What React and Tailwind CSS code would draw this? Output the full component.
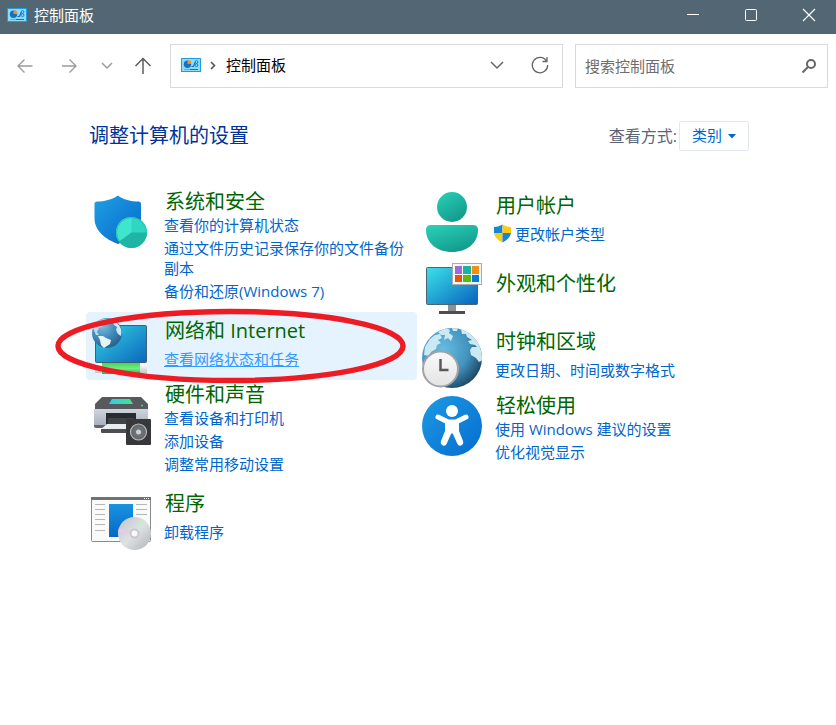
import React from "react";

function PanelIcon() {
  return (
    <svg width="20" height="14" viewBox="0 0 20 14" aria-hidden="true">
      <rect width="20" height="14" rx="0.5" fill="#1b9de2" />
      <rect x="1" y="1" width="18" height="12" fill="#8fdcfa" />
      <circle cx="6.500" cy="6.300" r="3.700" fill="#1173c7" />
      <path d="M6.500 6V2a4 4 0 0 1 3.800 4z" fill="#f78d1e" />
      <path d="M10.500 8.500h2l1.500-4" stroke="#1173c7" strokeWidth="1.200" fill="none" />
      <circle cx="15.500" cy="4" r="1.400" stroke="#1173c7" strokeWidth="0.900" fill="none" />
      <circle cx="15.500" cy="7.200" r="1.400" stroke="#1173c7" strokeWidth="0.900" fill="none" />
      <path d="M3 11.500h6" stroke="#f78d1e" />
      <path d="M9 11.500h8" stroke="#1173c7" />
    </svg>
  );
}

function Stroke({ size = 20, d, width = 1.3 }) {
  return (
    <svg width={size} height={size} viewBox="0 0 20 20" fill="none" stroke="currentColor" strokeWidth={width} aria-hidden="true">
      <path d={d} />
    </svg>
  );
}

function CategoryIcon({ children }) {
  return (
    <svg className="shrink-0" width="62" height="64" viewBox="0 0 62 64" aria-hidden="true">
      {children}
    </svg>
  );
}

function SecurityIcon() {
  return (
    <CategoryIcon>
      <defs>
        <linearGradient id="shield" x1="0" y1="0" x2="1" y2="1">
          <stop offset="0" stopColor="#1fa0e4" />
          <stop offset="1" stopColor="#0568cb" />
        </linearGradient>
      </defs>
      <path d="M28 6.500C33 10.500 41 12.500 49 12.500Q51 12.500 51 15V30C51 42 41 50 28 55C15 50 4.500 42 4.500 29V15Q4.500 12.500 7 12.500C14 12.500 22 10.500 28 6.500Z" fill="url(#shield)" />
      <circle cx="41.500" cy="43.500" r="15.500" fill="#2fd6c0" />
      <path d="M41.500 43.500V28A15.500 15.500 0 0 0 29 52.500Z" fill="#3fe6cd" />
      <path d="M41.500 43.500H57A15.500 15.500 0 0 1 29 52.700Z" fill="#1fb5a4" />
      <circle cx="41.500" cy="43.500" r="15" fill="none" stroke="#1fb5a4" strokeWidth="0.800" />
    </CategoryIcon>
  );
}

function NetworkIcon() {
  return (
    <CategoryIcon>
      <defs>
        <linearGradient id="netScreen" x1="0" y1="0" x2="1" y2="1">
          <stop offset="0" stopColor="#38d3e4" />
          <stop offset="1" stopColor="#0867bd" />
        </linearGradient>
        <linearGradient id="cable" x1="0" y1="0" x2="0" y2="1">
          <stop offset="0" stopColor="#45d45b" />
          <stop offset="0.500" stopColor="#6df07d" />
          <stop offset="1" stopColor="#32af48" />
        </linearGradient>
        <linearGradient id="plug" x1="0" y1="0" x2="0" y2="1">
          <stop offset="0" stopColor="#ffffff" />
          <stop offset="1" stopColor="#c3c8cc" />
        </linearGradient>
        <radialGradient id="netGlobe" cx="0.350" cy="0.250" r="0.800">
          <stop offset="0" stopColor="#7dbde0" />
          <stop offset="0.600" stopColor="#3c84b5" />
          <stop offset="1" stopColor="#275e86" />
        </radialGradient>
      </defs>
      <rect x="5.500" y="11.500" width="51" height="37" rx="1" fill="url(#netScreen)" stroke="#3d6073" />
      <rect x="5" y="50" width="52" height="9" fill="url(#plug)" />
      <rect x="12" y="49" width="38" height="11" fill="url(#cable)" />
      <circle cx="17" cy="19" r="15" fill="url(#netGlobe)" />
      <path d="M3 14Q6 8 11 5.500L17 5l-1 3-4 1 1 3-4 2-2 4 2 3-3 0z" fill="#b5dbec" />
      <path d="M8 22l5 0 3 2 5 2-1 4-3 2-3 2-3-3-1-5z" fill="#e6f3f7" />
      <path d="M22 6q6 2 9 9 1 3 0 7l-3-2-2-4 1-3-3-2z" fill="#cfe9f2" />
    </CategoryIcon>
  );
}

function HardwareIcon() {
  return (
    <CategoryIcon>
      <defs>
        <linearGradient id="scan"><stop offset="0" stopColor="#31cce9" /><stop offset="1" stopColor="#42e28c" /></linearGradient>
        <linearGradient id="printer" x1="0" y1="0" x2="0" y2="1"><stop offset="0" stopColor="#cfd5dd" /><stop offset="1" stopColor="#a5adb9" /></linearGradient>
      </defs>
      <path d="M12 15H51L58 22V27H5V22Z" fill="#565a5f" />
      <path d="M22 17H40L43 22H19Z" fill="url(#scan)" />
      <path d="M4 27H58V44Q58 45 57 45H5Q4 45 4 44Z" fill="url(#printer)" />
      <circle cx="52" cy="23.500" r="1" fill="#54db60" />
      <rect x="16" y="31" width="30" height="12" fill="#292b2e" />
      <rect x="18" y="36" width="26" height="6" fill="#414447" />
      <path d="M4 43H16V46H6Q4 46 4 44Z" fill="#62666b" />
      <path d="M17 42H38V47H11Z" fill="#e8edf0" />
      <path d="M11 47H38V51H12Q11 51 11 50Z" fill="#4b4e52" />
      <rect x="36" y="37" width="25" height="26" rx="1" fill="#38383a" />
      <circle cx="48.500" cy="50" r="8" fill="#66696d" stroke="#b7babc" strokeWidth="1.200" />
      <circle cx="48.500" cy="50" r="5.500" fill="#6d7176" />
      <circle cx="48.500" cy="50" r="2.500" fill="#cbd0d3" />
    </CategoryIcon>
  );
}

function ProgramsIcon() {
  return (
    <CategoryIcon>
      <defs>
        <linearGradient id="app" x1="0" y1="0" x2="0" y2="1"><stop offset="0" stopColor="#1894e1" /><stop offset="1" stopColor="#0868c4" /></linearGradient>
        <linearGradient id="disc" x1="0" y1="0" x2="1" y2="1"><stop offset="0" stopColor="#bfc4c7" /><stop offset="0.500" stopColor="#dfe2e3" /><stop offset="1" stopColor="#afb3b5" /></linearGradient>
      </defs>
      <rect x="1.500" y="10.500" width="59" height="44" rx="1" fill="#fafafa" stroke="#8a8a8a" />
      <path d="M1 10h60v3H1z" fill="#707274" />
      <path d="M54 11.500h5" stroke="#fff" strokeDasharray="1 1" />
      <rect x="19" y="17" width="24" height="33" fill="url(#app)" />
      <path d="M5 17.500h10M5 22.500h10M5 27.500h10M5 32.500h10M5 37.500h10M5 43.500h10M46 17.500h11M46 22.500h11M46 27.500h11" stroke="#b4b6b8" />
      <circle cx="44.500" cy="46.500" r="16.500" fill="url(#disc)" />
      <path d="M44.500 46.500L29 41l-1 4z" fill="#efc6e9" />
      <path d="M44.500 46.500L52 32l3 2z" fill="#c9eccb" />
      <circle cx="44.500" cy="46.500" r="5" fill="#c6cacc" />
      <circle cx="44.500" cy="46.500" r="3" fill="#f8f8f8" />
    </CategoryIcon>
  );
}

function UsersIcon() {
  return (
    <CategoryIcon>
      <defs>
        <linearGradient id="person" x1="0" y1="0" x2="0.600" y2="1"><stop offset="0" stopColor="#2bd2b9" /><stop offset="1" stopColor="#129b8c" /></linearGradient>
      </defs>
      <circle cx="31" cy="18" r="15" fill="url(#person)" />
      <path d="M10 36H52Q57 36 57 41C57 54 46 63 31 63S5 54 5 41Q5 36 10 36Z" fill="url(#person)" />
    </CategoryIcon>
  );
}

function AppearanceIcon() {
  return (
    <CategoryIcon>
      <defs>
        <linearGradient id="screen" x1="0" y1="0" x2="1" y2="1"><stop offset="0" stopColor="#3be2ea" /><stop offset="1" stopColor="#0862bd" /></linearGradient>
      </defs>
      <rect x="27" y="47" width="8" height="8" fill="#8a9299" />
      <path d="M18 54h26v3H18z" fill="#4a4f54" />
      <rect x="5.500" y="10.500" width="51" height="37" rx="1" fill="url(#screen)" stroke="#4c6472" />
      <rect x="31.500" y="6.500" width="29" height="21" fill="#f5f5f5" stroke="#a9abad" />
      <rect x="34" y="9" width="7" height="8" fill="#9b6dd7" />
      <rect x="42" y="9" width="8" height="8" fill="#18b3a4" />
      <rect x="51" y="9" width="7" height="8" fill="#f09010" />
      <rect x="34" y="18" width="7" height="7" fill="#e5540c" />
      <rect x="42" y="18" width="8" height="7" fill="#5fb80d" />
      <rect x="51" y="18" width="7" height="7" fill="#087bd8" />
    </CategoryIcon>
  );
}

function ClockIcon() {
  return (
    <CategoryIcon>
      <defs>
        <radialGradient id="earth" cx="0.350" cy="0.350" r="0.700"><stop offset="0" stopColor="#67bce1" /><stop offset="0.600" stopColor="#4394bf" /><stop offset="1" stopColor="#1f4b66" /></radialGradient>
        <clipPath id="earthClip"><circle cx="31" cy="33" r="30" /></clipPath>
        <linearGradient id="face" x1="0" y1="0" x2="0" y2="1"><stop offset="0" stopColor="#fafafa" /><stop offset="1" stopColor="#e3e3e4" /></linearGradient>
      </defs>
      <circle cx="31" cy="33" r="30" fill="url(#earth)" />
      <g clipPath="url(#earthClip)" fill="#cbe9f2">
        <path d="M3 30L4 22 9 14 14 10 19 9 21 13 17 15 20 18 16 20 15 24 10 27 8 31Z" />
        <path d="M17 7L25 3 29 5 28 8 32 11 30 16 27 13 23 15 24 10 20 10Z" />
        <path d="M40 4L48 6 56 13 61 24 58 24 54 20 49 19 47 16 51 15 46 12 45 9 41 9Z" />
        <path d="M51 22L57 22 62 26V35L58 37 55 33 50 30 49 25Z" />
        <path d="M31 3H37L36 6 32 6Z" />
      </g>
      <circle cx="19.500" cy="44" r="17.500" fill="url(#face)" stroke="#a3a3a6" strokeWidth="2" />
      <path d="M19.500 34V45H27.500" fill="none" stroke="#56585b" strokeWidth="2.500" />
    </CategoryIcon>
  );
}

function EaseIcon() {
  return (
    <CategoryIcon>
      <defs>
        <linearGradient id="ease" x1="0" y1="0" x2="1" y2="1"><stop offset="0" stopColor="#1e9ae3" /><stop offset="1" stopColor="#046dd0" /></linearGradient>
      </defs>
      <circle cx="31" cy="33" r="30" fill="url(#ease)" />
      <circle cx="31" cy="18" r="6" fill="#fff" />
      <path d="M17 24L27 29H35L45 24" fill="none" stroke="#fff" strokeWidth="5" strokeLinecap="round" strokeLinejoin="round" />
      <path d="M24 27H38V38L42 48Q43 51 40 52.500 37 53.500 36 50L32 41Q31 39.500 30 41L26 50Q25 53.500 22 52.500 19 51 20 48L24 38Z" fill="#fff" />
    </CategoryIcon>
  );
}

function UacShield() {
  return (
    <svg className="-ml-0.5 mr-[3px] inline-block align-[-3px]" width="19" height="19" viewBox="0 0 19 19" aria-hidden="true">
      <path d="M9.500 0.500Q5 3 1 3V9H9.500Z" fill="#1486d8" />
      <path d="M9.500 0.500Q14 3 18 3V9H9.500Z" fill="#ffc914" />
      <path d="M1 9H9.500V18.500Q2 15 1 9Z" fill="#ffc914" />
      <path d="M18 9H9.500V18.500Q17 15 18 9Z" fill="#1486d8" />
    </svg>
  );
}

function MarkerRing() {
  return (
    <svg className="pointer-events-none absolute -top-1 -left-8 z-10" width="352" height="76" viewBox="0 0 352 76" aria-hidden="true">
      <ellipse cx="176.500" cy="38" rx="172.500" ry="34.500" fill="none" stroke="#ed1c24" strokeWidth="5.500" />
    </svg>
  );
}

const leftColumn = [
  { title: "系统和安全", icon: SecurityIcon, links: ["查看你的计算机状态", "通过文件历史记录保存你的文件备份副本", "备份和还原(Windows 7)"] },
  { title: "网络和 Internet", icon: NetworkIcon, links: ["查看网络状态和任务"], active: true },
  { title: "硬件和声音", icon: HardwareIcon, links: ["查看设备和打印机", "添加设备", "调整常用移动设置"] },
  { title: "程序", icon: ProgramsIcon, links: ["卸载程序"] },
];

const rightColumn = [
  { title: "用户帐户", icon: UsersIcon, links: ["更改帐户类型"], shield: true },
  { title: "外观和个性化", icon: AppearanceIcon, links: [] },
  { title: "时钟和区域", icon: ClockIcon, links: ["更改日期、时间或数字格式"] },
  { title: "轻松使用", icon: EaseIcon, links: ["使用 Windows 建议的设置", "优化视觉显示"] },
];

function textLayout(count) {
  if (count === 0) return "pt-[19px]";
  if (count === 1) return "pt-[9px] gap-2";
  return "pt-[5px] pb-[11px] gap-[3px]";
}

function Category({ title, icon: Icon, links, active, shield }) {
  return (
    <section className={`relative flex min-h-[68px] items-start gap-3 rounded-sm pl-1 ${active ? "bg-[#e5f3ff]" : ""}`}>
      <div className="pt-0.5"><Icon /></div>
      <div className={`flex min-w-0 flex-1 flex-col items-start pr-2 ${textLayout(links.length)}`}>
        <h2 className="pl-px text-xl leading-5"><a href="#" className="text-[#006600]">{title}</a></h2>
        {links.map((link) => (
          <a key={link} href="#" className={`text-[15px] leading-5 ${active ? "text-[#3399ff] underline" : "text-[#0066cc]"}`}>
            {shield && <UacShield />}
            {link}
          </a>
        ))}
      </div>
      {active && <MarkerRing />}
    </section>
  );
}

export default function App() {
  return (
    <div className="min-h-screen bg-white font-['Open_Sans','Noto_Sans_CJK_SC',sans-serif] text-[15px] text-black">
      <header className="flex h-[34px] items-center bg-[#526773] pb-1 pl-[7px] text-white">
        <div className="flex flex-1 items-center gap-[7px]">
          <PanelIcon />
          <h1 className="leading-5">控制面板</h1>
        </div>
        <div className="flex">
          <button aria-label="最小化" className="flex w-[58px] justify-center pl-1"><Stroke width={1} d="M4 9.500H16" /></button>
          <button aria-label="最大化" className="flex w-[58px] justify-center pl-1">
            <svg width="20" height="20" fill="none" stroke="currentColor" aria-hidden="true"><rect x="4.500" y="4.500" width="11" height="11" rx="1" /></svg>
          </button>
          <button aria-label="关闭" className="flex w-[58px] justify-center pl-1"><Stroke width={1.2} d="M4 4L16 16M16 4L4 16" /></button>
        </div>
      </header>

      <div className="flex items-center pt-2.5 pr-2 pl-[15px]">
        <nav aria-label="导航" className="flex w-[155px] shrink-0 items-center text-[#9a9a9a]">
          <button aria-label="后退" className="mr-6"><Stroke d="M17.500 10H3M9.500 3.500L3 10 9.500 16.500" /></button>
          <button aria-label="前进" className="mr-[18px]"><Stroke d="M3 10H17M10.500 3.500L17 10 10.500 16.500" /></button>
          <button aria-label="最近的位置" className="mr-4"><Stroke width={1.5} d="M5 7L10 12 15 7" /></button>
          <button aria-label="向上" className="text-[#5c5c5c]"><Stroke width={1.5} d="M10 18V3M2.500 10L10 2.500 17.500 10" /></button>
        </nav>
        <div className="flex h-11 flex-1 items-center border border-[#d9d9d9] pb-0.5 pl-2.5">
          <PanelIcon />
          <svg className="mr-[9px] ml-2 text-[#555]" width="8" height="10" fill="none" stroke="currentColor" strokeWidth="1.600" aria-hidden="true"><path d="M2 2L5.500 5.500 2 9" /></svg>
          <a href="#" className="flex-1 leading-5">控制面板</a>
          <button aria-label="以前的位置" className="mr-[23px] text-[#666]"><Stroke width={1.5} d="M4 7L10 13 16 7" /></button>
          <button aria-label="刷新" className="mr-3 text-[#666]"><Stroke width={1.3} d="M16.500 6A7.700 7.700 0 1 0 17.700 10M17 2V6.500H12.500" /></button>
        </div>
        <div className="ml-3 flex h-11 w-[253px] items-center border border-[#d9d9d9] pr-2 pl-[9px]">
          <input type="text" aria-label="搜索控制面板" placeholder="搜索控制面板" className="h-8 min-w-0 flex-1 leading-8 outline-none placeholder:text-[#6d6d6d]" />
          <svg width="20" height="20" viewBox="0 0 20 20" fill="none" stroke="#666" aria-hidden="true">
            <circle cx="12" cy="8" r="4" strokeWidth="2" />
            <path d="M9 11L3.500 16.500" strokeWidth="2" />
          </svg>
        </div>
      </div>

      <main className="mr-[87px] ml-[86px]">
        <div className="flex items-center justify-between pt-[33px] pl-[3px]">
          <h2 className="text-xl leading-6 text-[#003399]">调整计算机的设置</h2>
          <div className="flex items-center gap-0.5">
            <label htmlFor="view" className="text-base leading-5 text-[#5a6478]">查看方式:</label>
            <div className="relative">
              <select id="view" className="h-[30px] w-[70px] appearance-none rounded-xs border border-[#e3e8f0] bg-white pb-px pl-3 text-[15px] text-[#0066cc] outline-none">
                <option>类别</option>
              </select>
              <svg className="pointer-events-none absolute top-[13px] right-[13px]" width="8" height="5" aria-hidden="true"><path d="M0 0H8L4 4.500Z" fill="#0066cc" /></svg>
            </div>
          </div>
        </div>
        <div className="grid grid-cols-2 pt-9 pr-px">
          <div>{leftColumn.map((item) => <Category key={item.title} {...item} />)}</div>
          <div>{rightColumn.map((item) => <Category key={item.title} {...item} />)}</div>
        </div>
      </main>
    </div>
  );
}
